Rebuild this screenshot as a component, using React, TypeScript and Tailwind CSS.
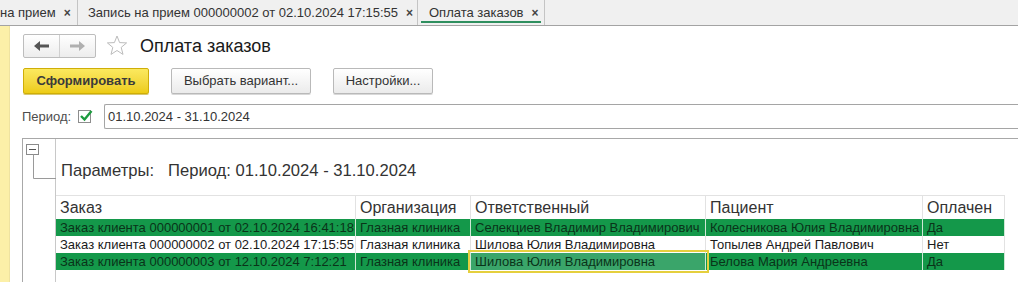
import React from 'react';

const rows = [
  {
    order: 'Заказ клиента 000000001 от 02.10.2024 16:41:18',
    org: 'Глазная клиника',
    resp: 'Селекциев Владимир Владимирович',
    patient: 'Колесникова Юлия Владимировна',
    paid: 'Да',
    green: true,
  },
  {
    order: 'Заказ клиента 000000002 от 02.10.2024 17:15:55',
    org: 'Глазная клиника',
    resp: 'Шилова Юлия Владимировна',
    patient: 'Топылев Андрей Павлович',
    paid: 'Нет',
    green: false,
  },
  {
    order: 'Заказ клиента 000000003 от 12.10.2024 7:12:21',
    org: 'Глазная клиника',
    resp: 'Шилова Юлия Владимировна',
    patient: 'Белова Мария Андреевна',
    paid: 'Да',
    green: true,
    selected: true,
  },
];

function Tab({ title, active, className }: { title: string; active?: boolean; className: string }) {
  return (
    <div className={`relative flex items-center h-full border-r border-[#c4c4c4] text-[13px] text-[#333] ${className}`}>
      <span className="whitespace-nowrap">{title}</span>
      <span className="ml-[8px] font-bold text-[12px] text-[#444]">×</span>
      {active && <div className="absolute left-[3px] right-[3px] bottom-[2px] h-[2px] bg-[#2f8f5f]" />}
    </div>
  );
}

function Arrow({ dir, color }: { dir: 'left' | 'right'; color: string }) {
  return (
    <svg width="15" height="10" viewBox="0 0 15 10">
      {dir === 'left' ? (
        <path d="M0 5 L6 0 L6 3.5 L15 3.5 L15 6.5 L6 6.5 L6 10 Z" fill={color} />
      ) : (
        <path d="M15 5 L9 0 L9 3.5 L0 3.5 L0 6.5 L9 6.5 L9 10 Z" fill={color} />
      )}
    </svg>
  );
}

function GrayButton({ label, className }: { label: string; className: string }) {
  return (
    <button
      className={`h-[26px] rounded-[2px] border border-[#b9b9b9] bg-gradient-to-b from-white to-[#ebebeb] text-[13px] text-[#333] shadow-[0_1px_0_#d8d8d8] ${className}`}
    >
      {label}
    </button>
  );
}

export default function App() {
  return (
    <div className="w-[1018px] h-[282px] overflow-hidden bg-white font-['Liberation_Sans',Arial,sans-serif] flex flex-col">
      {/* tab bar */}
      <div className="h-[26px] shrink-0 flex bg-[#f0f0f0] border-b border-[#a3a3a3]">
        <Tab title="на прием" className="w-[78px] pl-0" />
        <Tab title="Запись на прием 000000002 от 02.10.2024 17:15:55" className="w-[340px] pl-[10px]" />
        <Tab title="Оплата заказов" active className="w-[127px] pl-[11px]" />
      </div>

      <div className="flex flex-1 min-h-0">
        <div className="w-[10px] shrink-0 bg-[#fcf0a8] border-r border-[#efe3a0]" />

        <div className="flex-1 min-w-0 flex flex-col pl-[12px]">
          {/* nav + title */}
          <div className="flex items-center mt-[7px] h-[25px]">
            <div className="ml-[1px] flex h-[24px] w-[73px] rounded-[2px] border border-[#bdbdbd] bg-gradient-to-b from-white to-[#ededed]">
              <div className="w-[36px] flex items-center justify-center border-r border-[#d0d0d0]">
                <Arrow dir="left" color="#555" />
              </div>
              <div className="flex-1 flex items-center justify-center">
                <Arrow dir="right" color="#b0b0b0" />
              </div>
            </div>
            <svg width="22" height="21" viewBox="0 0 22 21" className="ml-[10px]">
              <path
                d="M11 1 L13.6 7.6 L20.6 7.9 L15.2 12.4 L17 19.4 L11 15.5 L5 19.4 L6.8 12.4 L1.4 7.9 L8.4 7.6 Z"
                fill="white"
                stroke="#bcbcbc"
                strokeWidth="1"
              />
            </svg>
            <span className="ml-[12px] text-[18px] text-[#1a1a1a] leading-none">Оплата заказов</span>
          </div>

          {/* command bar */}
          <div className="flex items-center gap-[22px] mt-[10px]">
            <button className="ml-[1px] h-[26px] w-[126px] rounded-[2px] border border-[#cfae08] bg-gradient-to-b from-[#fbe95e] to-[#edcc12] text-[13px] font-bold text-[#3a3a3a] shadow-[0_1px_0_#d8c870]">
              Сформировать
            </button>
            <GrayButton label="Выбрать вариант..." className="w-[140px]" />
            <GrayButton label="Настройки..." className="w-[100px]" />
          </div>

          {/* period */}
          <div className="flex items-center mt-[10px] h-[25px]">
            <span className="text-[13px] text-[#4d4d4d] w-[56px]">Период:</span>
            <div className="relative w-[13px] h-[13px] border border-[#8d8d8d] bg-white">
              <svg width="14" height="14" viewBox="0 0 14 14" className="absolute left-[0px] top-[-2px]">
                <path d="M2 7 L5.5 10.5 L12.5 2" fill="none" stroke="#1d9b3f" strokeWidth="2.4" />
              </svg>
            </div>
            <div className="ml-[13px] flex-1 h-[25px] rounded-l-[2px] border border-r-0 border-[#a5a5a5] flex items-center pl-[3px] text-[13px] text-[#333]">
              01.10.2024 - 31.10.2024
            </div>
          </div>

          {/* report */}
          <div className="mt-[9px] flex-1 flex border-t border-l border-[#a8a8a8]">
            <div className="w-[33px] shrink-0 border-r border-[#c8c8c8]">
              <svg width="33" height="44" viewBox="0 0 33 44">
                <rect x="3.5" y="5.5" width="12" height="10" fill="white" stroke="#8a8a8a" />
                <line x1="6" y1="10.5" x2="13" y2="10.5" stroke="#555" />
                <line x1="10.5" y1="15.5" x2="10.5" y2="39.5" stroke="#9a9a9a" />
                <line x1="10.5" y1="39.5" x2="33" y2="39.5" stroke="#9a9a9a" />
              </svg>
            </div>
            <div className="flex-1 min-w-0 flex flex-col">
              <div className="h-[56px] flex items-center pl-[5px] pt-[9px] text-[16.6px] text-[#333] whitespace-nowrap">
                <span>Параметры:</span>
                <span className="ml-[14px]">Период: 01.10.2024 - 31.10.2024</span>
              </div>
              <div className="w-[949px] border-t border-[#e2e2e2]">
                <div className="grid grid-cols-[300px_115px_235px_217px_82px] h-[23px] text-[16px] text-[#333]">
                  {['Заказ', 'Организация', 'Ответственный', 'Пациент', 'Оплачен'].map((h) => (
                    <div key={h} className="border-r border-[#e2e2e2] pl-[4px] pt-[3px] leading-[18px] whitespace-nowrap">
                      {h}
                    </div>
                  ))}
                </div>
                {rows.map((r, i) => {
                  const cells = [r.order, r.org, r.resp, r.patient, r.paid];
                  return (
                    <div
                      key={i}
                      className={`grid grid-cols-[300px_115px_235px_217px_82px] h-[17px] text-[13px] leading-[17px] ${
                        r.green ? 'bg-[#14984a] text-[#0a3319]' : 'bg-white text-[#1a1a1a]'
                      }`}
                    >
                      {cells.map((c, j) => {
                        const sel = r.selected && j === 2;
                        return (
                          <div
                            key={j}
                            className={`pl-[4px] whitespace-nowrap overflow-hidden ${
                              r.green ? 'border-r border-[#cfe8d6]' : 'border-r border-[#e2e2e2]'
                            } ${sel ? 'bg-[#3aa56a] outline-2 outline-offset-[1px] outline-[#e5cf3e] relative' : ''}`}
                          >
                            {c}
                          </div>
                        );
                      })}
                    </div>
                  );
                })}
              </div>
            </div>
          </div>
        </div>
      </div>
    </div>
  );
}
